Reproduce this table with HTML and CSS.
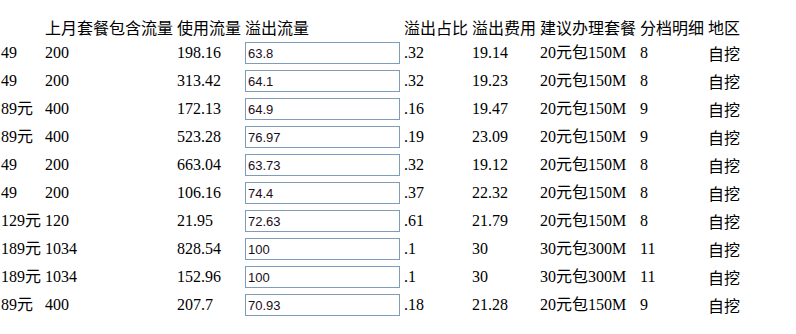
FILE: index.html
```html
<!DOCTYPE html>
<html>
<head>
<meta charset="utf-8">
<link rel="stylesheet" href="styles.css">
</head>
<body>
<table class="grid">
<tr class="head"><td></td><td>上月套餐包含流量</td><td>使用流量</td><td>溢出流量</td><td>溢出占比</td><td>溢出费用</td><td>建议办理套餐</td><td>分档明细</td><td>地区</td></tr>
<tr><td>49</td><td>200</td><td>198.16</td><td><input class="box" value="63.8"></td><td>.32</td><td>19.14</td><td>20元包150M</td><td>8</td><td class="area">自挖</td></tr>
<tr><td>49</td><td>200</td><td>313.42</td><td><input class="box" value="64.1"></td><td>.32</td><td>19.23</td><td>20元包150M</td><td>8</td><td class="area">自挖</td></tr>
<tr><td>89元</td><td>400</td><td>172.13</td><td><input class="box" value="64.9"></td><td>.16</td><td>19.47</td><td>20元包150M</td><td>9</td><td class="area">自挖</td></tr>
<tr><td>89元</td><td>400</td><td>523.28</td><td><input class="box" value="76.97"></td><td>.19</td><td>23.09</td><td>20元包150M</td><td>9</td><td class="area">自挖</td></tr>
<tr><td>49</td><td>200</td><td>663.04</td><td><input class="box" value="63.73"></td><td>.32</td><td>19.12</td><td>20元包150M</td><td>8</td><td class="area">自挖</td></tr>
<tr><td>49</td><td>200</td><td>106.16</td><td><input class="box" value="74.4"></td><td>.37</td><td>22.32</td><td>20元包150M</td><td>8</td><td class="area">自挖</td></tr>
<tr><td>129元</td><td>120</td><td>21.95</td><td><input class="box" value="72.63"></td><td>.61</td><td>21.79</td><td>20元包150M</td><td>8</td><td class="area">自挖</td></tr>
<tr><td>189元</td><td>1034</td><td>828.54</td><td><input class="box" value="100"></td><td>.1</td><td>30</td><td>30元包300M</td><td>11</td><td class="area">自挖</td></tr>
<tr><td>189元</td><td>1034</td><td>152.96</td><td><input class="box" value="100"></td><td>.1</td><td>30</td><td>30元包300M</td><td>11</td><td class="area">自挖</td></tr>
<tr><td>89元</td><td>400</td><td>207.7</td><td><input class="box" value="70.93"></td><td>.18</td><td>21.28</td><td>20元包150M</td><td>9</td><td class="area">自挖</td></tr>
</table>
</body>
</html>
```
FILE: styles.css
```css
html, body {
  margin: 0;
  padding: 0;
  background: #fff;
}
body {
  padding-top: 14px;
  font-family: "Liberation Serif", "Noto Sans CJK SC", serif;
  font-size: 16px;
  color: #000;
}
.grid {
  margin-left: -2px;
  border-collapse: separate;
  border-spacing: 2px;
}
.grid td {
  padding: 1px;
  vertical-align: middle;
  white-space: nowrap;
  line-height: 20px;
}
.head td {
  font-family: "Noto Sans CJK SC", sans-serif;
  letter-spacing: 0;
}
.area {
  font-family: "Noto Sans CJK SC", sans-serif;
  padding-left: 2px;
}
.box {
  display: block;
  box-sizing: border-box;
  width: 155px;
  height: 22px;
  margin: 1px 0;
  padding: 1px 2px;
  border: 1px solid #7f9db9;
  font-family: "Liberation Sans", Arial, sans-serif;
  font-size: 13px;
  color: #1a0d1a;
  background: #fff;
  outline: none;
}
```
